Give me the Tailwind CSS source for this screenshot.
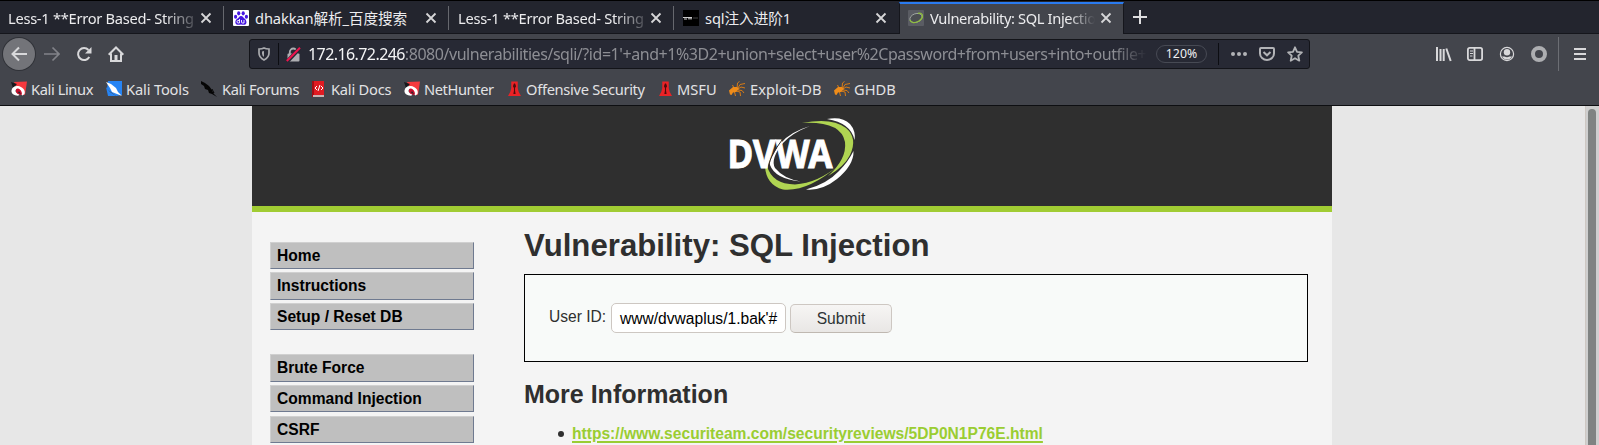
<!DOCTYPE html>
<html lang="en">
<head>
<meta charset="utf-8">
<title>Vulnerability: SQL Injection</title>
<script src="https://cdn.jsdelivr.net/npm/@tailwindcss/browser@4"></script>
</head>
<body class="h-[445px] w-[1599px] overflow-hidden bg-[#e7e7e7] flex flex-col">
<svg class="hidden">
  <symbol id="close" viewBox="0 0 12 12"><path d="M1.5 1.5l9 9m0-9l-9 9" stroke="#d6d6d8" stroke-width="1.8" fill="none"/></symbol>
  <symbol id="dragon" viewBox="0 0 16 16"><path d="M3 1L16 .5 14 14 8 12z" fill="#f5393e"/><path d="M0 1l6 2-4 4z" fill="#17181c"/><path d="M.5 9.500C1 6 4 4.500 7 5c4 .5 8 4 6.500 8l-2 1.500-1.500-1C10.500 10 9 8 7 8c-2.500 0-3 1.800-2 3.300l3.500 2.500-1.500 1C3 14.500 0 12.500 .5 9.500z" fill="#fff"/><path d="M5 10.500C4.500 8 6 7 8 8s3 3 3 5.500L9.500 14 6 12.500z" fill="#c8102e"/><path d="M6.500 11l2-.5 1.500 3z" fill="#26282e"/></symbol>
  <symbol id="rocket" viewBox="0 0 14 16"><path d="M3.500 0h7v7l1 4 2.500 4.500H0L2.500 11l1-4z" fill="#ea2226"/><path d="M6.400 2h1.200l1.100 3-1.100 2v3l.6 3.500H5.800l.6-3.500V7L5.300 5z" fill="#4d0b0d"/></symbol>
  <symbol id="bug" viewBox="0 0 16 16"><g fill="none" stroke="#d87b15" stroke-width="1"><path d="M8 8L8.500 2 10.500 .5M9 7l2-3.500 5-1M9 8l3-2 4 1M9 9l4 .5L15 12M7 10l4 1 .5 4M5 9l1.500 6M5 7L3.500 4"/></g><path d="M0 9.500L4 6l4 0 2 2-3 3-3 .5L2.500 14 1 13.500z" fill="#ef8c1a"/></symbol>
</svg>

<!-- tab strip -->
<div class="h-[34px] shrink-0 border-t border-black bg-[#23252e] flex font-['Noto_Sans','Noto_Sans_CJK_SC',sans-serif] text-[14.67px] text-[#ececee] shadow-[inset_0_-1px_0_#15161c]">
  <div class="w-[224px] flex items-center pl-2 h-[33px]">
    <div class="w-[186px] overflow-hidden whitespace-nowrap mask-r-from-84% mask-r-to-104%"><span class="tracking-[-0.28px]">Less-1 **Error Based- String</span></div>
    <svg class="size-3 ml-1.5"><use href="#close"/></svg>
    <i class="h-6 w-px bg-[#66686e] ml-auto"></i>
  </div>
  <div class="w-[225px] flex items-center pl-[9px] h-[33px]">
    <svg class="size-4 mr-[7px]" viewBox="0 0 16 16"><rect width="16" height="16" rx="1" fill="#fff"/><g fill="#4516e0"><ellipse cx="5.700" cy="3.300" rx="1.600" ry="2.100"/><ellipse cx="10.200" cy="3.300" rx="1.600" ry="2.100"/><ellipse cx="2.600" cy="6.700" rx="1.600" ry="2"/><ellipse cx="13.400" cy="6.700" rx="1.600" ry="2"/><path d="M8 6c2 0 2.500 2 4 3s2.600 5.500-.500 5.700C10 14.900 9 14.500 8 14.500s-2 .4-3.500.2C1.400 14.500 2 10 4 9s2-3 4-3z"/></g><path d="M6.500 9v4M6.500 10.500H5q-1 0-1 1.200T5 13h1.500M8.500 10v2q0 1 1 1h1.500v-3" stroke="#fff" fill="none" stroke-width=".9"/></svg>
    <div class="w-[163px] whitespace-nowrap"><span class="-ml-px tracking-[-0.12px]">dhakkan解析_百度搜索</span></div>
    <svg class="size-3 ml-[6px]"><use href="#close"/></svg>
    <i class="h-6 w-px bg-[#66686e] ml-auto"></i>
  </div>
  <div class="w-[225px] flex items-center pl-[9px] h-[33px]">
    <div class="w-[186px] overflow-hidden whitespace-nowrap mask-r-from-84% mask-r-to-104%"><span class="tracking-[-0.28px]">Less-1 **Error Based- String</span></div>
    <svg class="size-3 ml-1.5"><use href="#close"/></svg>
    <i class="h-6 w-px bg-[#66686e] ml-auto"></i>
  </div>
  <div class="w-[225px] flex items-center pl-[9px] h-[33px]">
    <svg class="size-4 mr-[6px]" viewBox="0 0 16 16"><rect width="16" height="16" fill="#000"/><path d="M0 7.500h9M1 9h3M5 8.800h4" stroke="#ccc" stroke-width="1"/><path d="M10 8h5" stroke="#444"/></svg>
    <div class="w-[164px] whitespace-nowrap"><span class="tracking-[-0.1px]">sql注入进阶1</span></div>
    <svg class="size-3 ml-[6px]"><use href="#close"/></svg>
  </div>
  <div class="w-[225px] h-[33px] flex items-center pl-[8px] bg-[#43454c] mt-px border-x border-t-2 border-t-[#2a7bf0] border-x-[#15161c] pb-[3px]">
    <svg class="size-4 mr-[6px]" viewBox="0 0 16 16"><rect width="16" height="16" rx="1" fill="#5a5c63"/><ellipse cx="8" cy="8" rx="6.300" ry="4.300" transform="rotate(-20 8 8)" fill="#4b4e52" stroke="#b5bdb5" stroke-width=".7"/><path d="M10 3.300c6-1 5.500 5 1 7.700S3 13 2 10" fill="none" stroke="#8fbf3c" stroke-width="1.300"/></svg>
    <div class="w-[165px] overflow-hidden whitespace-nowrap mask-r-from-84% mask-r-to-100%"><span class="tracking-[-0.37px]">Vulnerability: SQL Injection</span></div>
    <svg class="size-3 ml-[5px]"><use href="#close"/></svg>
  </div>
  <svg class="size-[14px] ml-[9px] mt-[9px]" viewBox="0 0 14 14"><path d="M7 0v14M0 7h14" stroke="#dedee0" stroke-width="2"/></svg>
</div>

<!-- navigation toolbar -->
<div class="h-10 shrink-0 bg-[#43454c] flex items-center text-[#d8d8da] font-['Noto_Sans',sans-serif]">
  <div class="size-8 ml-[3px] rounded-full bg-[#737479] ring-1 ring-[#303238] flex items-center justify-center"><svg class="size-4" viewBox="0 0 16 16" fill="none" stroke="currentColor" stroke-width="2"><path d="M16 8H1.500M8 1.500L1.500 8 8 14.500"/></svg></div>
  <svg class="size-4 ml-[9px] text-[#828389]" viewBox="0 0 16 16" fill="none" stroke="currentColor" stroke-width="1.700"><path d="M0 8h14.500M8.500 1.500L15 8l-6.500 6.500"/></svg>
  <svg class="size-4 ml-4" viewBox="0 0 16 16"><path d="M13.300 11A6 6 0 1 1 12.500 4" fill="none" stroke="currentColor" stroke-width="2"/><path d="M15.500 1v6.500H9z" fill="currentColor"/></svg>
  <svg class="size-4 ml-4" viewBox="0 0 16 16" fill="none" stroke="currentColor" stroke-width="2"><path d="M.7 8.700L8 1.500l7.300 7.200M3 7.500V15h10V7.500"/><path d="M8 9v5.500" stroke-width="3"/></svg>
  <div class="ml-[125px] w-[1061px] h-[30px] rounded-[3px] border border-[#131419] bg-[#272934] flex items-center">
    <svg class="w-3 h-[14px] ml-2 text-[#a9aaae]" viewBox="0 0 12 14"><path d="M1 2Q4 2 6 1q2 1 5 1v4q0 4.500-5 7-5-2.500-5-7z" fill="none" stroke="currentColor" stroke-width="1.700"/><path d="M6 4v6Q4 8.500 4 6.500V4.400z" fill="currentColor"/></svg>
    <i class="w-px h-[22px] bg-[#0c0d12] ml-[8px]"></i>
    <svg class="size-[15px] ml-[7px]" viewBox="0 0 15 15"><path d="M3.800 7V5a3.500 3.500 0 0 1 7 0v2" fill="none" stroke="#aeaeb2" stroke-width="1.800"/><rect x="1.500" y="6.500" width="12" height="8" rx="1" fill="#aeaeb2"/><path d="M.8 15L14 .8" stroke="#272934" stroke-width="4"/><path d="M.8 14L14 .8" stroke="#f0134d" stroke-width="2"/></svg>
    <div class="ml-[7px] w-[839px] overflow-hidden whitespace-nowrap text-[16px] text-[#8d8e94] mask-r-from-96% mask-r-to-100%"><span class="tracking-[-0.45px]"><span class="text-[#f4f4f5] tracking-[-0.58px]">172.16.72.246</span>:8080/vulnerabilities/sqli/?id=1'+and+1%3D2+union+select+user%2Cpassword+from+users+into+outfile+</span></div>
    <div class="ml-[9px] w-[51px] h-[18px] rounded-full border border-[#474a54] text-[12.300px] text-[#f0f0f2] leading-none flex items-center justify-center">120%</div>
    <i class="w-px h-[22px] bg-[#0c0d12] ml-[11px]"></i>
    <svg class="w-4 h-4 ml-3 text-[#b2b3b6]" viewBox="0 0 16 16" fill="currentColor"><circle cx="2" cy="8" r="2"/><circle cx="8" cy="8" r="2"/><circle cx="14" cy="8" r="2"/></svg>
    <svg class="w-4 h-4 ml-3 text-[#b2b3b6]" viewBox="0 0 16 16" fill="none" stroke="currentColor" stroke-width="2"><path d="M2 2h12q1 0 1 1v4.500a7 6.500 0 0 1-14 0V3q0-1 1-1z"/><path d="M4.500 6L8 9.300 11.500 6"/></svg>
    <svg class="w-4 h-4 ml-3 text-[#b2b3b6]" viewBox="0 0 16 16" fill="none" stroke="currentColor" stroke-width="1.800" stroke-linejoin="round"><path d="M8 1.300l2 4.500 4.900.5-3.600 3.400 1 5L8 12.200l-4.300 2.500 1-5L1.100 6.300 6 5.800z"/></svg>
  </div>
  <svg class="w-4 h-4 ml-[126px]" viewBox="0 0 16 16" fill="none" stroke="currentColor" stroke-width="2"><path d="M1 1v14M4.500 3v12M7.700 3v12M10.300 2.500L14.700 15"/></svg>
  <svg class="w-4 h-4 ml-[15px]" viewBox="0 0 16 16" fill="none" stroke="currentColor" stroke-width="1.800"><rect x=".9" y="1.900" width="14.200" height="12.200" rx="1.800"/><path d="M7.500 2v12"/><path d="M3 5h3M3 7.500h3M3 10h2.500" stroke-width="1.100"/></svg>
  <svg class="w-4 h-4 ml-4" viewBox="0 0 16 16"><circle cx="8" cy="8" r="6.600" fill="none" stroke="currentColor" stroke-width="1.200"/><circle cx="8" cy="6.200" r="3.200" fill="currentColor"/><path d="M3 10.500h2.500Q8 12 10.500 10.500H13Q11.500 13.600 8 13.600T3 10.500z" fill="currentColor"/></svg>
  <svg class="w-4 h-4 ml-4" viewBox="0 0 16 16"><circle cx="8" cy="8" r="6" fill="none" stroke="#adaeb1" stroke-width="4"/></svg>
  <i class="w-px h-[34px] bg-[#6c6e74] ml-[11px]"></i>
  <svg class="w-3 h-3 ml-[15px]" viewBox="0 0 12 12"><path d="M0 1h12M0 6h12M0 11h12" stroke="currentColor" stroke-width="2"/></svg>
</div>

<!-- bookmarks -->
<div class="h-8 shrink-0 bg-[#43454c] border-b border-[#0e0f12] pl-[11px] pb-px flex items-center text-[14.67px] text-[#e2e2e4] font-['Noto_Sans',sans-serif] whitespace-nowrap">
  <div class="w-[95px] flex items-center gap-1"><svg class="size-4"><use href="#dragon"/></svg><span class="tracking-[-0.4px]">Kali Linux</span></div>
  <div class="w-[95px] flex items-center gap-1"><svg class="size-4" viewBox="0 0 16 16"><path d="M2 0h14v14L10 15 1 8z" fill="#2684f4"/><path d="M0 1l5 2 5 4 2 4 4 4-5-2-5-2-2-4z" fill="#fff"/><path d="M0 6l4 5 6 4H2z" fill="#2684f4"/></svg><span class="tracking-[-0.15px]">Kali Tools</span></div>
  <div class="w-[111px] flex items-center gap-[5px]"><svg class="size-4" viewBox="0 0 16 16"><path d="M0 0l4 2 4 3 3 4 1 3 4 4-5-3-3-1-1-3-3-1-1-3-3-2z" fill="#050505"/><path d="M8 10l5 2-2-4" stroke="#050505" fill="none"/></svg><span class="tracking-[-0.35px]">Kali Forums</span></div>
  <div class="w-[92px] flex items-center gap-[7px]"><svg class="w-3 h-4" viewBox="0 0 12 16"><path d="M0 0h12v14H0z" fill="#e01b22"/><path d="M0 0h2v16H0z" fill="#a50d14"/><path d="M1 14h11v2H1z" fill="#c8b4b4"/><path d="M5 5L3 7l2 2M9 5l2 2-2 2M8 4L6 10" stroke="#fff" fill="none"/></svg><span class="tracking-[-0.22px]">Kali Docs</span></div>
  <div class="w-[104px] flex items-center gap-1"><svg class="size-4"><use href="#dragon"/></svg><span class="tracking-[-0.4px]">NetHunter</span></div>
  <div class="w-[151px] flex items-center gap-[5px]"><svg class="w-[13px] h-4"><use href="#rocket"/></svg><span class="tracking-[-0.3px]">Offensive Security</span></div>
  <div class="w-[70px] flex items-center gap-[5px]"><svg class="w-[13px] h-4"><use href="#rocket"/></svg><span>MSFU</span></div>
  <div class="w-[105px] flex items-center gap-[5px]"><svg class="size-4"><use href="#bug"/></svg><span>Exploit-DB</span></div>
  <div class="flex items-center gap-1"><svg class="size-4"><use href="#bug"/></svg><span>GHDB</span></div>
</div>

<!-- page -->
<div class="h-[339px] shrink-0 overflow-hidden flex justify-between font-['Liberation_Sans',sans-serif] text-[#2f2f2f]">
  <div class="ml-[252px] w-[1080px] bg-[#f4f4f4] overflow-hidden">
    <header class="h-[106px] bg-[#2f2f2f] border-b-6 border-[#a1cc33] flex pl-[448px]">
      <svg class="w-[180px] h-[100px] -mt-px" viewBox="0 0 180 100">
        <path d="M110 21Q90 27 81 38Q69 53 70 60Q75 74 101 76.500Q84 74 75 63Q70 54 83 38Q92 28 110 21z" fill="#fff"/>
        <path d="M127 14Q142 11 150 19Q156 26 154.500 35Q151 18 127 14z" fill="#fff"/>
        <path d="M153.500 46Q154 60 137 74Q122 86 106 84.500Q127 79 139 66Q148 57 153.500 46z" fill="#fff"/>
        <path d="M102 18Q132 12 146 23Q158 33 150 50Q144 62 128 71Q147 54 145 37Q141 16 102 18z" fill="#b0d552"/>
        <path d="M65 61Q66 80 83 84.500Q108 87 139 60Q118 78 95 79.500Q72 79 67 61z" fill="#b0d552"/>
        <text x="27.500" y="62.800" textLength="105" lengthAdjust="spacingAndGlyphs" class="font-['Noto_Sans',sans-serif] font-bold text-[39.500px]" fill="#fff" stroke="#fff" stroke-width=".9">DVWA</text>
        <path d="M82 35Q75 44 71.500 52T68.500 63" fill="none" stroke="#2f2f2f" stroke-width="1"/>
      </svg>
    </header>
    <div class="flex">
      <nav class="ml-[18px] w-[204px] pt-[30px] text-[15.600px] font-bold text-black leading-[26px]">
        <div class="h-[27px] bg-[#bfbfbf] border border-t-[#d0d0d0] border-l-[#d0d0d0] border-r-[#6f7a90] border-b-[#6f7a90] pl-1.5 mb-[3px]">Home</div>
        <div class="h-[28px] bg-[#bfbfbf] border border-t-[#d0d0d0] border-l-[#d0d0d0] border-r-[#6f7a90] border-b-[#6f7a90] pl-1.5 mb-[3px]">Instructions</div>
        <div class="h-[27px] bg-[#bfbfbf] border border-t-[#d0d0d0] border-l-[#d0d0d0] border-r-[#6f7a90] border-b-[#6f7a90] pl-1.5 mb-6">Setup / Reset DB</div>
        <div class="h-[28px] bg-[#bfbfbf] border border-t-[#d0d0d0] border-l-[#d0d0d0] border-r-[#6f7a90] border-b-[#6f7a90] pl-1.5 mb-[3px]">Brute Force</div>
        <div class="h-[27px] bg-[#bfbfbf] border border-t-[#d0d0d0] border-l-[#d0d0d0] border-r-[#6f7a90] border-b-[#6f7a90] pl-1.5 mb-1">Command Injection</div>
        <div class="h-[27px] bg-[#bfbfbf] border border-t-[#d0d0d0] border-l-[#d0d0d0] border-r-[#6f7a90] border-b-[#6f7a90] pl-1.5">CSRF</div>
      </nav>
      <main class="ml-[50px] w-[784px]">
        <h1 class="mt-4 h-[46px] leading-[36px] text-[31.200px] font-bold">Vulnerability: SQL Injection</h1>
        <form class="h-[88px] border border-black bg-[#f8faf9] pl-6 pt-7 flex text-[15.600px]">
          <label class="w-[62px] mt-[4px] leading-[20px] whitespace-nowrap">User ID:</label>
          <div class="w-[175px] h-[30px] rounded-[5px] border border-[#cdc7c2] bg-white text-black leading-[30px] pl-2 overflow-hidden whitespace-nowrap">www/dvwaplus/1.bak'#</div>
          <button type="button" class="ml-1 mt-px w-[102px] h-[29px] rounded-[5px] border border-[#cdc7c2] border-b-[#bfb8b1] bg-linear-to-b from-[#f6f5f4] to-[#e9e7e5] text-[#2e3436] leading-[27px]">Submit</button>
        </form>
        <h2 class="mt-[17px] h-[35px] leading-[30px] text-[25px] font-bold">More Information</h2>
        <div class="pl-[34px] pt-[10px] flex items-center gap-2"><i class="size-1.5 rounded-full bg-[#2f2f2f]"></i><a class="text-[15.600px] leading-[19px] font-bold text-[#9acd32] underline decoration-2 underline-offset-[2px]">https://www.securiteam.com/securityreviews/5DP0N1P76E.html</a></div>
      </main>
    </div>
  </div>
  <div class="w-[14px] border-l border-[#cdc7c2] bg-[#cfcfcf] pl-0.5 pt-[3px]"><div class="w-2 h-full rounded-t-full bg-[#7f8382]"></div></div>
</div>
</body>
</html>
